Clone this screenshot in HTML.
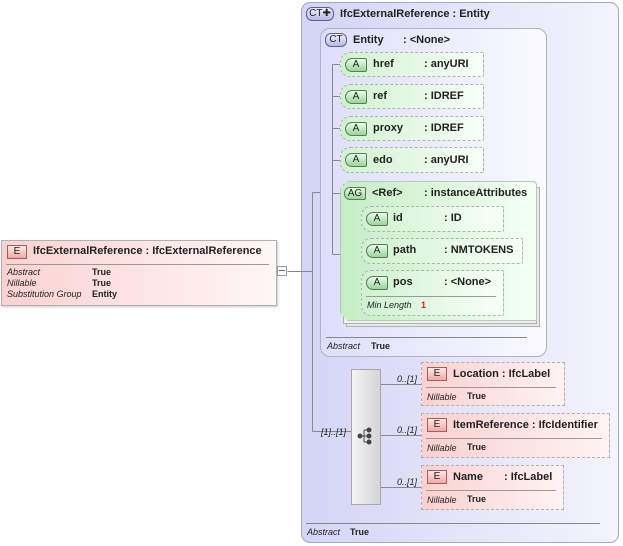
<!DOCTYPE html>
<html><head><meta charset="utf-8"><style>
*{margin:0;padding:0;box-sizing:border-box}
body{width:623px;height:546px;background:#fff;position:relative;overflow:hidden;font-family:"Liberation Sans",Arial,sans-serif;font-size:11px;color:#222}
.a{position:absolute}
.b{font-weight:bold;white-space:nowrap;margin-top:1px}
.i{font-style:italic;font-size:9px;white-space:nowrap;margin-top:1px}
.v{font-weight:bold;font-size:9px;white-space:nowrap;margin-top:1px}
.attr{position:absolute;border:1px dashed #b0b0b0;background:linear-gradient(to right,#d0f2d0,#f8fff8);border-radius:10px 2px 2px 10px}
.badgeA{position:absolute;width:22px;height:14px;border:1px solid #5a7a5a;border-radius:7px 2px 2px 7px;background:linear-gradient(#e8ffe8,#9ad49a);font-size:10px;text-align:center;line-height:12px}
.el{position:absolute;border:1px dashed #b0b0b0;background:linear-gradient(to right,#fbd0d0,#fff3f3)}
.badgeE{position:absolute;width:20px;height:14px;border:1px solid #a06060;background:linear-gradient(#ffe8e8,#f0a8a8);font-size:10px;text-align:center;line-height:12px}
</style></head><body>
<div class="a" style="left:301px;top:2px;width:318px;height:541px;border:1px solid #a8a8c0;border-radius:9px;background:linear-gradient(to right,#d4d4f6,#f4f4fd)"></div>
<div class="a" style="left:306px;top:7px;width:28px;height:14px;border:1px solid #606090;border-radius:6px;background:linear-gradient(#eeeefc,#b8b8e8);font-size:10px;line-height:12px;text-align:center">CT✚</div>
<div class="a b" style="left:340px;top:7px">IfcExternalReference : Entity</div>

<div class="a" style="left:320px;top:28px;width:227px;height:329px;border:1px solid #b0b0c8;border-radius:10px;background:linear-gradient(to right,#dedefa,#fafaff)"></div>
<div class="a" style="left:325px;top:33px;width:22px;height:14px;border:1px solid #606090;border-radius:6px;background:linear-gradient(#eeeefc,#b8b8e8);font-size:10px;line-height:12px;text-align:center">CT</div>
<div class="a b" style="left:353px;top:33px">Entity</div><div class="a b" style="left:403px;top:33px">: &lt;None&gt;</div>

<svg class="a" style="left:0;top:0" width="623" height="546">
<g stroke="#888" fill="none" stroke-width="1">
<path d="M287.5 271.5H312.5M312.5 192.5V431.5M312.5 192.5H320M312.5 431.5H351"/>
<path d="M332.5 64.5V254.5M332.5 64.5H345M332.5 96.5H345M332.5 128.5H345M332.5 160.5H345M332.5 193.5H345M332.5 254.5H365"/>
<path d="M351.5 222.5V286.5M351.5 222.5H365M351.5 286.5H365"/>
<path d="M381 384.5H421M381 435.5H421M381 487.5H421"/>
<path d="M326 337.5H527M306 523.5H600"/>
</g>
</svg>

<div class="attr" style="left:340px;top:52px;width:144px;height:25px"></div>
<div class="badgeA" style="left:345px;top:58px">A</div><div class="a b" style="left:373px;top:57px">href</div><div class="a b" style="left:424px;top:57px">: anyURI</div>
<div class="attr" style="left:340px;top:84px;width:144px;height:25px"></div>
<div class="badgeA" style="left:345px;top:90px">A</div><div class="a b" style="left:373px;top:89px">ref</div><div class="a b" style="left:424px;top:89px">: IDREF</div>
<div class="attr" style="left:340px;top:116px;width:144px;height:25px"></div>
<div class="badgeA" style="left:345px;top:122px">A</div><div class="a b" style="left:373px;top:121px">proxy</div><div class="a b" style="left:424px;top:121px">: IDREF</div>
<div class="attr" style="left:340px;top:147px;width:144px;height:26px"></div>
<div class="badgeA" style="left:345px;top:153px">A</div><div class="a b" style="left:373px;top:153px">edo</div><div class="a b" style="left:424px;top:153px">: anyURI</div>

<div class="a" style="left:346px;top:187px;width:194px;height:140px;border:1px solid #b0b0b0;background:#e8e8e8"></div>
<div class="a" style="left:343px;top:184px;width:194px;height:140px;border:1px solid #b0b0b0;background:#f0f0f0"></div>
<div class="a" style="left:340px;top:181px;width:197px;height:140px;border:1px solid #b8c8b8;border-radius:0 4px 0 0;background:linear-gradient(to right,#c4eec4,#f4fff4);clip-path:polygon(8px 0,100% 0,100% 100%,8px 100%,0 calc(100% - 8px),0 8px)"></div>
<div class="a" style="left:344px;top:187px;width:22px;height:13px;border:1px solid #5a7a5a;border-radius:6px 2px 2px 6px;background:linear-gradient(#e8ffe8,#9ad49a);font-size:10px;line-height:11px;text-align:center">AG</div>
<div class="a b" style="left:372px;top:186px">&lt;Ref&gt;</div><div class="a b" style="left:424px;top:186px">: instanceAttributes</div>

<div class="attr" style="left:361px;top:206px;width:143px;height:26px"></div>
<div class="badgeA" style="left:366px;top:212px">A</div><div class="a b" style="left:393px;top:211px">id</div><div class="a b" style="left:444px;top:211px">: ID</div>
<div class="attr" style="left:361px;top:238px;width:162px;height:26px"></div>
<div class="badgeA" style="left:366px;top:244px">A</div><div class="a b" style="left:393px;top:243px">path</div><div class="a b" style="left:444px;top:243px">: NMTOKENS</div>
<div class="attr" style="left:361px;top:270px;width:143px;height:46px"></div>
<div class="badgeA" style="left:366px;top:276px">A</div><div class="a b" style="left:393px;top:275px">pos</div><div class="a b" style="left:444px;top:275px">: &lt;None&gt;</div>
<div class="a" style="left:366px;top:296px;width:130px;height:1px;background:#999"></div>
<div class="a i" style="left:367px;top:299px">Min Length</div><div class="a v" style="left:421px;top:299px;color:#e02020">1</div>

<div class="a i" style="left:327px;top:340px">Abstract</div><div class="a v" style="left:371px;top:340px">True</div>

<div class="a" style="left:351px;top:369px;width:30px;height:136px;border:1px solid #a8a8a8;background:linear-gradient(to right,#f4f4f4,#d4d4d4)"></div>
<svg class="a" style="left:356px;top:426px" width="20" height="20"><g stroke="#444" fill="#444"><path d="M4 10H8M8 4V16M8 4H13M8 10H13M8 16H13" fill="none"/><circle cx="4" cy="10" r="2"/><circle cx="13" cy="4" r="2"/><circle cx="13" cy="10" r="2"/><circle cx="13" cy="16" r="2"/></g></svg>
<div class="a i" style="left:321px;top:426px">[1]..[1]</div>
<div class="a i" style="left:397px;top:373px">0..[1]</div>
<div class="a i" style="left:397px;top:424px">0..[1]</div>
<div class="a i" style="left:397px;top:476px">0..[1]</div>

<div class="el" style="left:421px;top:362px;width:144px;height:44px"></div>
<div class="badgeE" style="left:427px;top:367px">E</div><div class="a b" style="left:453px;top:367px">Location : IfcLabel</div>
<div class="a" style="left:426px;top:387px;width:130px;height:1px;background:#999"></div>
<div class="a i" style="left:427px;top:391px">Nillable</div><div class="a v" style="left:467px;top:390px">True</div>

<div class="el" style="left:421px;top:413px;width:189px;height:45px"></div>
<div class="badgeE" style="left:427px;top:418px">E</div><div class="a b" style="left:453px;top:418px">ItemReference : IfcIdentifier</div>
<div class="a" style="left:426px;top:438px;width:176px;height:1px;background:#999"></div>
<div class="a i" style="left:427px;top:442px">Nillable</div><div class="a v" style="left:467px;top:441px">True</div>

<div class="el" style="left:421px;top:465px;width:143px;height:45px"></div>
<div class="badgeE" style="left:427px;top:470px">E</div><div class="a b" style="left:453px;top:470px">Name</div><div class="a b" style="left:504px;top:470px">: IfcLabel</div>
<div class="a" style="left:426px;top:490px;width:130px;height:1px;background:#999"></div>
<div class="a i" style="left:427px;top:494px">Nillable</div><div class="a v" style="left:467px;top:493px">True</div>

<div class="a i" style="left:307px;top:526px">Abstract</div><div class="a v" style="left:350px;top:526px">True</div>

<div class="a" style="left:1px;top:240px;width:276px;height:66px;border:1px solid #b0b0b0;background:linear-gradient(to right,#fbd2d2,#fff6f6);box-shadow:1px 1px 2px #ccc"></div>
<div class="badgeE" style="left:7px;top:245px">E</div>
<div class="a" style="left:33px;top:245px;font-size:11px;white-space:nowrap;font-weight:bold">IfcExternalReference : IfcExternalReference</div>
<div class="a" style="left:6px;top:264px;width:263px;height:1px;background:#999"></div>
<div class="a i" style="left:7px;top:266px">Abstract</div><div class="a v" style="left:92px;top:266px">True</div>
<div class="a i" style="left:7px;top:277px">Nillable</div><div class="a v" style="left:92px;top:277px">True</div>
<div class="a i" style="left:7px;top:288px">Substitution Group</div><div class="a v" style="left:92px;top:288px">Entity</div>
<div class="a" style="left:277px;top:266px;width:10px;height:10px;border:1px solid #999;background:#fff"></div>
<div class="a" style="left:279px;top:270px;width:6px;height:1px;background:#666"></div>
</body></html>
